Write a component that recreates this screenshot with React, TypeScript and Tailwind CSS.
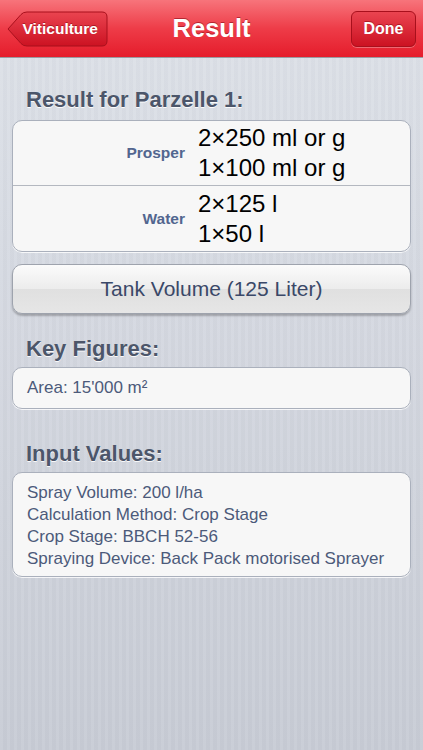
const font = { fontFamily: '"Liberation Sans", Arial, sans-serif' };

const Card = ({ className, children }: { className?: string; children?: React.ReactNode }) => (
  <div
    className={`mx-[12px] rounded-[10px] border border-[#aab0bc] bg-[#f7f7f7] shadow-[0_1px_0_rgba(255,255,255,0.8)] ${className ?? ''}`}
  >
    {children}
  </div>
);

const Heading = ({ children, className }: { children: React.ReactNode; className?: string }) => (
  <div
    className={`pl-[26px] text-[22px] font-bold leading-[22px] text-[#4c566a] [text-shadow:0_1px_0_rgba(255,255,255,0.9)] ${className ?? ''}`}
  >
    {children}
  </div>
);

const ResultRow = ({ label, lines, last }: { label: string; lines: string[]; last?: boolean }) => (
  <div className={`flex h-[65px] items-center ${last ? '' : 'border-b border-[#b4b8c0]'}`}>
    <div className="w-[185px] pr-[13px] text-right text-[15.5px] font-bold text-[#52668f]">{label}</div>
    <div className="flex flex-col text-[24px] leading-[30px] text-black">
      {lines.map((l) => (
        <span key={l}>{l}</span>
      ))}
    </div>
  </div>
);

const NavBar = () => (
  <div className="relative flex h-[58px] items-center justify-between border-b border-[#9a9aa0] bg-[linear-gradient(#f7747b,#ee3c48_50%,#e51c2b)] px-[7px]">
    {/* back button */}
    <div className="relative flex h-[36px] w-[101px] items-center justify-end pr-[10px]">
      <svg className="absolute inset-0" width="101" height="36" viewBox="0 0 101 36">
        <defs>
          <linearGradient id="bk" x1="0" y1="0" x2="0" y2="1">
            <stop offset="0" stopColor="#ea4450" />
            <stop offset="1" stopColor="#cc1222" />
          </linearGradient>
        </defs>
        <path
          d="M1 18 L14 3.5 Q16 1 20 1 L95 1 Q100 1 100 6 L100 30 Q100 35 95 35 L20 35 Q16 35 14 32.5 Z"
          fill="url(#bk)"
          stroke="#a8101c"
          strokeWidth="1"
        />
      </svg>
      <span className="relative text-[15.5px] font-bold text-white [text-shadow:0_-1px_0_rgba(120,0,10,0.5)]">
        Viticulture
      </span>
    </div>
    <div className="pointer-events-none absolute left-0 right-0 top-[14px] text-center text-[25.5px] font-bold leading-[28px] text-white [text-shadow:0_-1px_0_rgba(120,0,10,0.5)]">
      Result
    </div>
    <div className="flex h-[36px] w-[65px] items-center justify-center rounded-[6px] border border-[#a8101c] bg-[linear-gradient(#ea4450,#cc1222)] text-[16px] font-bold text-white shadow-[0_1px_0_rgba(255,255,255,0.3)] [text-shadow:0_-1px_0_rgba(120,0,10,0.5)]">
      Done
    </div>
  </div>
);

export default function App() {
  return (
    <div
      style={font}
      className="min-h-[750px] w-full bg-[repeating-linear-gradient(90deg,rgba(255,255,255,0.06)_0px,rgba(255,255,255,0.06)_3px,rgba(0,0,0,0.012)_3px,rgba(0,0,0,0.012)_7px),linear-gradient(#dde1e8,#c7cbd5)]"
    >
      <NavBar />

      <Heading className="pt-[31px]">Result for Parzelle 1:</Heading>
      <Card className="mt-[9px]">
        <ResultRow label="Prosper" lines={['2×250 ml or g', '1×100 ml or g']} />
        <ResultRow label="Water" lines={['2×125 l', '1×50 l']} last />
      </Card>

      <div className="mx-[12px] mt-[12px] flex h-[50px] items-center justify-center rounded-[10px] border border-[#9ea3ad] bg-[linear-gradient(#fbfbfb,#ececec_50%,#e0e0e0_51%,#e6e6e6)] text-[21px] text-[#3a4868] shadow-[0_2px_2px_rgba(0,0,0,0.25)]">
        Tank Volume (125 Liter)
      </div>

      <Heading className="pt-[24px]">Key Figures:</Heading>
      <Card className="mt-[7px] flex h-[42px] items-center px-[14px] text-[17px] text-[#4c5a7a]">
        Area: 15'000 m²
      </Card>

      <Heading className="pt-[34px]">Input Values:</Heading>
      <Card className="mt-[7px] px-[14px] pb-[6px] pt-[9px] text-[17px] leading-[22px] text-[#4c5a7a]">
        <div>Spray Volume: 200 l/ha</div>
        <div>Calculation Method: Crop Stage</div>
        <div>Crop Stage: BBCH 52-56</div>
        <div>Spraying Device: Back Pack motorised Sprayer</div>
      </Card>
    </div>
  );
}
